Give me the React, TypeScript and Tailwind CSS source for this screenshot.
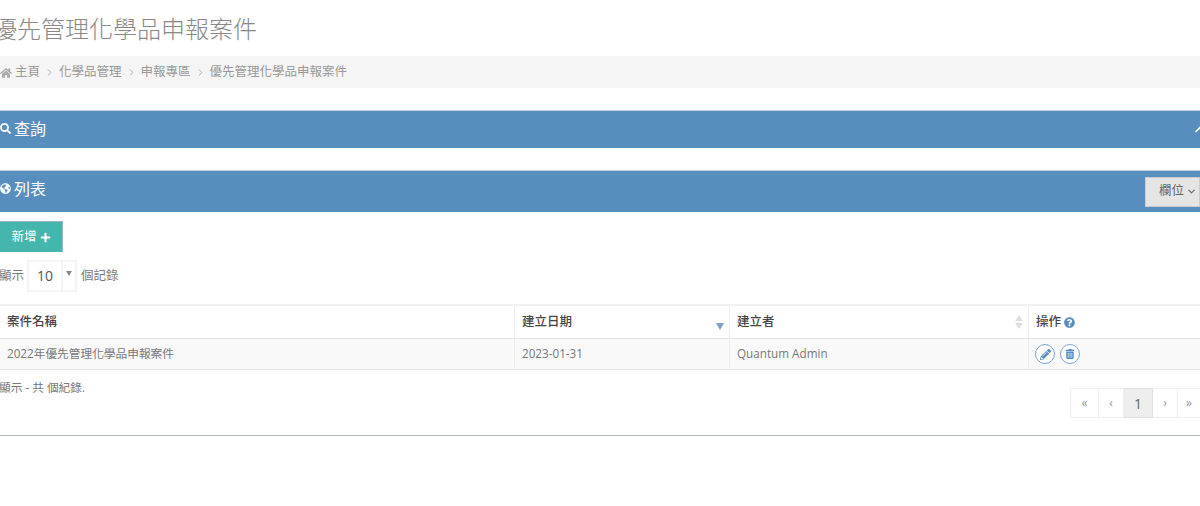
import { ChevronDown, ChevronRight, ChevronUp } from "lucide-react";
import {
  FaGlobeAmericas,
  FaHome,
  FaPencilAlt,
  FaPlus,
  FaQuestionCircle,
  FaSearch,
  FaTrashAlt,
} from "react-icons/fa";

const font = "font-['Open_Sans','Noto_Sans_CJK_TC',sans-serif]";

const crumbs = ["化學品管理", "申報專區", "優先管理化學品申報案件"];

const Breadcrumb = () => (
  <div className="mt-[11px] flex h-8 items-center bg-[#f5f5f5] pt-[1px] text-[12.5px] text-[#999]">
    <FaHome className="h-[12px] w-[12px] text-[#aaa]" />
    <span className="ml-[3px]">主頁</span>
    {crumbs.map((c) => (
      <span key={c} className="flex items-center">
        <ChevronRight className="mx-[4px] h-[11px] w-[11px] text-[#aaa]" />
        {c}
      </span>
    ))}
  </div>
);

const Pager = () => (
  <div className="flex h-[30px] text-[12px] text-[#8a94a6]">
    <div className="flex w-[29px] items-center justify-center border border-[#eee]">«</div>
    <div className="flex w-[25px] items-center justify-center border-y border-r border-[#eee]">‹</div>
    <div className="flex w-[29px] items-center justify-center border-y border-r border-[#e0e0e0] bg-[#eee] text-[14px] text-[#666]">1</div>
    <div className="flex w-[25px] items-center justify-center border-y border-r border-[#eee]">›</div>
    <div className="flex w-[22px] items-center justify-center border-y border-[#eee]">»</div>
  </div>
);

export default function App() {
  return (
    <div className={`${font} h-[506px] w-[1200px] overflow-hidden bg-white text-[#666]`}>
      <h1 className="-ml-[7px] h-[45px] pt-[12px] text-[24px] leading-[33px] font-light whitespace-nowrap text-[#888]">
        優先管理化學品申報案件
      </h1>
      <Breadcrumb />

      <div className="mt-[22px] flex h-[38px] items-center border-t border-[#c5d0dc] bg-[#578ebe] pb-[2px] text-white">
        <FaSearch className="h-[11px] w-[11px]" />
        <span className="ml-[3px] text-[16px]">查詢</span>
        <ChevronUp className="ml-auto -mr-[11px] h-[20px] w-[20px]" />
      </div>

      <div className="mt-[22px] flex h-[42px] items-center border-t border-[#c5d0dc] bg-[#578ebe] text-white">
        <div className="mb-[6px] flex items-center">
          <FaGlobeAmericas className="h-[11px] w-[11px]" />
          <span className="ml-[3px] text-[16px]">列表</span>
        </div>
        <div className="mt-[1px] ml-auto flex h-[30px] w-[55px] items-center border border-[#ccc] bg-[#e5e5e5] pb-[1px] pl-[13px] text-[12.5px] whitespace-nowrap text-[#666]">
          欄位
          <ChevronDown className="ml-[2px] h-[11px] w-[11px] stroke-[2.5]" />
        </div>
      </div>

      <div className="mt-[9px] flex h-[31px] w-[63px] items-center justify-center gap-[3px] border-t border-r border-[#9db4c8] bg-[#44b6ae] text-[12.5px] text-white">
        新增
        <FaPlus className="h-[11px] w-[11px]" />
      </div>

      <div className="mt-[8px] flex h-[32px] items-center text-[12.5px] whitespace-nowrap text-[#777]">
        <span className="-ml-[1px]">顯示</span>
        <div className="ml-[3px] flex h-[32px] w-[50px] border-2 border-[#f4f4f4]">
          <span className="flex w-[32px] items-center justify-center pb-[2px] text-[14px] text-[#555]">10</span>
          <span className="flex flex-1 justify-center border-l-2 border-[#f4f4f4] pt-[9px]">
            <svg viewBox="0 0 6 5" className="h-[5px] w-[6px] fill-[#888]">
              <path d="M0 0h6L3 5z" />
            </svg>
          </span>
        </div>
        <span className="ml-[4px]">個記錄</span>
      </div>

      <div className="mt-[12px] border-t-2 border-[#f2f2f2] text-[11.7px]">
        <div className="grid h-[33px] grid-cols-[514px_215px_299px_172px] border-b border-[#e4e4e4] text-[12.5px] font-medium text-[#444]">
          <div className="flex items-center pl-[7px]">案件名稱</div>
          <div className="flex items-center border-l border-[#eee] pl-[7px]">
            建立日期
            <svg viewBox="0 0 8 7" className="mt-[9px] mr-[5px] ml-auto h-[7px] w-[8px] fill-[#7f9fc6]">
              <path d="M0 0h8L4 7z" />
            </svg>
          </div>
          <div className="flex items-center border-l border-[#eee] pl-[7px]">
            建立者
            <svg viewBox="0 0 8 14" className="mr-[5px] ml-auto h-[14px] w-[8px] fill-[#ddd]">
              <path d="M4 0l4 6H0zM0 8h8l-4 6z" />
            </svg>
          </div>
          <div className="flex items-center gap-[3px] border-l border-[#eee] pl-[7px]">
            操作
            <FaQuestionCircle className="h-[11px] w-[11px] text-[#578ebe]" />
          </div>
        </div>
        <div className="grid h-[31px] grid-cols-[514px_215px_299px_172px] border-b border-[#e4e4e4] bg-[#f9f9f9] text-[#777]">
          <div className="flex items-center pl-[7px]">2022年優先管理化學品申報案件</div>
          <div className="flex items-center border-l border-[#eee] pl-[7px]">2023-01-31</div>
          <div className="flex items-center border-l border-[#eee] pl-[7px]">Quantum Admin</div>
          <div className="flex items-center gap-[5px] border-l border-[#eee] pl-[6px]">
            <span className="flex h-[20px] w-[20px] items-center justify-center rounded-full border border-[#78a6d6] bg-white text-[#578ebe]">
              <FaPencilAlt className="h-[11px] w-[11px]" />
            </span>
            <span className="flex h-[20px] w-[20px] items-center justify-center rounded-full border border-[#78a6d6] bg-white text-[#578ebe]">
              <FaTrashAlt className="h-[10px] w-[10px]" />
            </span>
          </div>
        </div>
      </div>

      <div className="flex h-[66px] justify-between border-b border-[#b0b5bb]">
        <span className="-ml-[1px] pt-[8px] text-[11.7px] leading-[18px] text-[#777]">顯示 - 共 個紀錄.</span>
        <div className="pt-[18px]">
          <Pager />
        </div>
      </div>
    </div>
  );
}
